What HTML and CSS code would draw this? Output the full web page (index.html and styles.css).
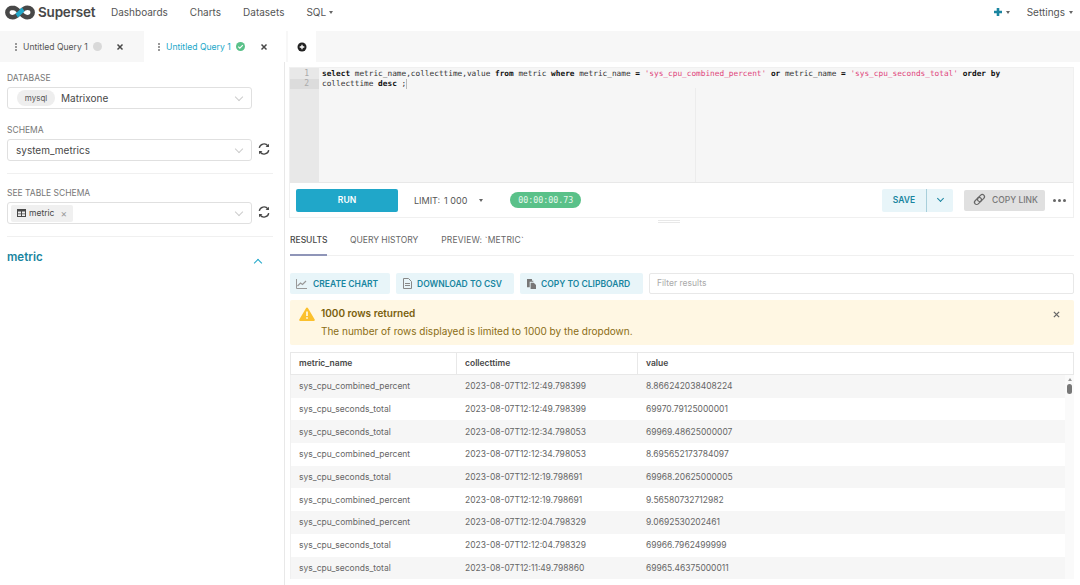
FILE: index.html
```html
<!DOCTYPE html>
<html lang="en">
<head>
<meta charset="utf-8">
<title>Superset SQL Lab</title>
<link rel="stylesheet" href="styles.css">
</head>
<body>
<header class="nav">
  <div class="brand">
    <svg class="logo" viewBox="0 0 32 16" width="30" height="15"><path d="M8.2 3C4.7 3 2.5 5.2 2.5 8s2.2 5 5.7 5c4 0 6-3 7.800-5 1.800-2 3.800-5 7.800-5 3.500 0 5.700 2.200 5.700 5s-2.200 5-5.700 5c-4 0-6-3-7.800-5-1.800-2-3.800-5-7.800-5z" fill="none" stroke="#484848" stroke-width="4.800"/><path d="M12.500 11.300c1.500-1 2.500-2.200 3.500-3.300 1-1.100 2-2.300 3.500-3.300" fill="none" stroke="#20a7c9" stroke-width="4.800"/></svg>
    <span class="brand-name">Superset</span>
  </div>
  <nav class="menu">
    <span>Dashboards</span><span>Charts</span><span>Datasets</span><span class="caret-item">SQL<i class="caret"></i></span>
  </nav>
  <div class="nav-right">
    <span class="plus-item"><svg viewBox="0 0 10 10" width="10" height="10"><path d="M5 1v8M1 5h8" stroke="#1a85a0" stroke-width="2.600" fill="none"/></svg><i class="caret"></i></span>
    <span class="caret-item settings">Settings<i class="caret"></i></span>
  </div>
</header>

<div class="tabbar">
  <div class="tab">
    <span class="grip"></span><span class="tab-title">Untitled Query 1</span><span class="dot grey"></span>
    <svg class="tab-x" viewBox="0 0 8 8" width="8" height="8"><path d="M1.500 1.500l5 5M6.500 1.500l-5 5" stroke="#484848" stroke-width="1.500"/></svg>
  </div>
  <div class="tab active">
    <span class="grip"></span><span class="tab-title">Untitled Query 1</span>
    <span class="dot green"><svg viewBox="0 0 9 9" width="9" height="9"><path d="M2.300 4.700l1.500 1.500 3-3" fill="none" stroke="#fff" stroke-width="1.100"/></svg></span>
    <svg class="tab-x" viewBox="0 0 8 8" width="8" height="8"><path d="M1.500 1.500l5 5M6.500 1.500l-5 5" stroke="#484848" stroke-width="1.500"/></svg>
  </div>
  <div class="tab-add"><svg viewBox="0 0 10 10" width="10" height="10"><circle cx="5" cy="5" r="4.500" fill="#222"/><path d="M5 2.700v4.600M2.700 5h4.600" stroke="#fff" stroke-width="1.300"/></svg></div>
</div>

<div class="workspace">
  <aside class="side">
    <div class="field">
      <div class="label">DATABASE</div>
      <div class="select-row">
        <div class="select"><span class="pill">mysql</span><span class="select-val">Matrixone</span><i class="chev"></i></div>
      </div>
    </div>
    <div class="field tight">
      <div class="label">SCHEMA</div>
      <div class="select-row">
        <div class="select"><span class="select-val solo">system_metrics</span><i class="chev"></i></div>
        <svg class="refresh" viewBox="0 0 14 14" width="12" height="12"><path d="M1.500 5.800A5.600 5.600 0 0 1 11.600 3.500M12.500 8.200A5.600 5.600 0 0 1 2.400 10.500" fill="none" stroke="#484848" stroke-width="1.600"/><path d="M12.800 0.800v4h-4zM1.200 13.200v-4h4z" fill="#484848"/></svg>
      </div>
    </div>
    <hr class="rule">
    <div class="field tight">
      <div class="label">SEE TABLE SCHEMA</div>
      <div class="select-row">
        <div class="select"><span class="tag"><svg viewBox="0 0 9 8" width="9" height="8"><path d="M0 0h9v8H0z" fill="#484848"/><path d="M1 2.500h3v2H1zM5 2.500h3v2H5zM1 5.300h3v1.800H1zM5 5.300h3v1.800H5z" fill="#eee"/></svg>metric<span class="tag-x">×</span></span><i class="chev"></i></div>
        <svg class="refresh" viewBox="0 0 14 14" width="12" height="12"><path d="M1.500 5.800A5.600 5.600 0 0 1 11.600 3.500M12.500 8.200A5.600 5.600 0 0 1 2.400 10.500" fill="none" stroke="#484848" stroke-width="1.600"/><path d="M12.800 0.800v4h-4zM1.200 13.200v-4h4z" fill="#484848"/></svg>
      </div>
    </div>
    <hr class="rule">
    <div class="table-head"><span class="table-name">metric</span><i class="chev-up"></i></div>
  </aside>

  <main class="main">
    <section class="editor-card">
      <div class="editor">
        <div class="gutter"><div class="ln">1</div><div class="ln cur">2</div></div>
        <div class="code">
          <div class="margin-line"></div>
          <div class="code-line"><b>select</b> metric_name,collecttime,value <b>from</b> metric <b>where</b> metric_name <b>=</b> <em>'sys_cpu_combined_percent'</em> <b>or</b> metric_name <b>=</b> <em>'sys_cpu_seconds_total'</em> <b>order by</b></div>
          <div class="code-line">collecttime <b>desc</b> ;<span class="cursor"></span></div>
        </div>
      </div>
      <div class="toolbar">
        <button class="run">RUN</button>
        <span class="limit">LIMIT:<span class="limit-val">1 000</span><i class="caret"></i></span>
        <span class="timer">00:00:00.73</span>
        <span class="spacer"></span>
        <div class="save"><span class="save-text">SAVE</span><span class="save-arrow"><i class="chev-down"></i></span></div>
        <div class="copy"><svg viewBox="0 0 14 14" width="14" height="14"><g fill="none" stroke="#666" stroke-width="1.200"><rect x="-0.500" y="-2.200" width="8" height="4.400" rx="2.200" transform="translate(3.500 10.500) rotate(-45)"/><rect x="-0.500" y="-2.200" width="8" height="4.400" rx="2.200" transform="translate(6.500 7.500) rotate(-45)"/></g></svg>COPY LINK</div>
        <div class="more"><i></i><i></i><i></i></div>
      </div>
    </section>
    <div class="drag"></div>
    <div class="tabs">
      <span class="t on">RESULTS</span><span class="t">QUERY HISTORY</span><span class="t wide">PREVIEW: `METRIC`</span>
    </div>
    <div class="actions">
      <span class="act a1"><svg viewBox="0 0 11 10" width="11" height="10"><path d="M.5 0v9.500H11" fill="none" stroke="#999" stroke-width="1"/><path d="M1.500 7l3-3 2 1.500L10 2" fill="none" stroke="#999" stroke-width="1.200"/></svg>CREATE CHART</span>
      <span class="act a2"><svg viewBox="0 0 9 11" width="9" height="11"><path d="M.5.500h5l3 3v7h-8z" fill="none" stroke="#888"/><path d="M2 5.500h5M2 7.500h5" stroke="#888"/></svg>DOWNLOAD TO CSV</span>
      <span class="act a3"><svg viewBox="0 0 10 11" width="9" height="10"><path d="M0 0h5.500v2H7v1H3v6H0z" fill="#777"/><path d="M4 4h3.500L10 6.500V11H4z" fill="#777"/></svg>COPY TO CLIPBOARD</span>
      <span class="filter">Filter results</span>
    </div>
    <div class="alert">
      <svg class="warn" viewBox="0 0 16 14" width="16" height="14"><path d="M8 .5a1 1 0 0 1 .9.500l6.800 11.400a1 1 0 0 1-.9 1.500H1.200a1 1 0 0 1-.9-1.500L7.100 1A1 1 0 0 1 8 .5z" fill="#fbc02d"/><path d="M8 4.500v4.500M8 10.300v1.500" stroke="#fff" stroke-width="1.500"/></svg>
      <div class="alert-body">
        <div class="alert-title">1000 rows returned</div>
        <div class="alert-text">The number of rows displayed is limited to 1000 by the dropdown.</div>
      </div>
      <svg class="alert-x" viewBox="0 0 8 8" width="7" height="7"><path d="M1 1l6 6M7 1l-6 6" stroke="#666" stroke-width="1.500"/></svg>
    </div>
    <div class="table">
      <div class="thead"><span class="c1">metric_name</span><span class="c2">collecttime</span><span class="c3">value</span></div>
      <div class="tbody">
        <div class="rows">
          <div class="row"><span class="c1">sys_cpu_combined_percent</span><span class="c2">2023-08-07T12:12:49.798399</span><span class="c3">8.866242038408224</span></div>
          <div class="row"><span class="c1">sys_cpu_seconds_total</span><span class="c2">2023-08-07T12:12:49.798399</span><span class="c3">69970.79125000001</span></div>
          <div class="row"><span class="c1">sys_cpu_seconds_total</span><span class="c2">2023-08-07T12:12:34.798053</span><span class="c3">69969.48625000007</span></div>
          <div class="row"><span class="c1">sys_cpu_combined_percent</span><span class="c2">2023-08-07T12:12:34.798053</span><span class="c3">8.695652173784097</span></div>
          <div class="row"><span class="c1">sys_cpu_seconds_total</span><span class="c2">2023-08-07T12:12:19.798691</span><span class="c3">69968.20625000005</span></div>
          <div class="row"><span class="c1">sys_cpu_combined_percent</span><span class="c2">2023-08-07T12:12:19.798691</span><span class="c3">9.56580732712982</span></div>
          <div class="row"><span class="c1">sys_cpu_combined_percent</span><span class="c2">2023-08-07T12:12:04.798329</span><span class="c3">9.0692530202461</span></div>
          <div class="row"><span class="c1">sys_cpu_seconds_total</span><span class="c2">2023-08-07T12:12:04.798329</span><span class="c3">69966.7962499999</span></div>
          <div class="row"><span class="c1">sys_cpu_seconds_total</span><span class="c2">2023-08-07T12:11:49.798860</span><span class="c3">69965.46375000011</span></div>
        </div>
        <div class="scroll"><i class="up"></i><i class="thumb"></i></div>
      </div>
    </div>
  </main>
</div>
</body>
</html>
```
FILE: styles.css
```css
* { box-sizing: border-box; }
html, body { margin: 0; height: 585px; overflow: hidden; }
body { font-family: Inter, "Liberation Sans", sans-serif; color: #484848; background: #fff; font-size: 9px; }
i { display: block; }

.nav { height: 31px; display: flex; align-items: center; padding: 0 7px 7px 5px; }
.brand { display: flex; align-items: center; gap: 3px; width: 106px; }
.logo { flex: none; }
.brand-name { font-size: 13.500px; font-weight: 600; letter-spacing: -.2px; color: #484848; }
.menu { display: flex; gap: 22px; font-size: 10px; color: #555; }
.caret-item { display: inline-flex; align-items: center; gap: 3px; }
.settings { gap: 4px; }
.caret { width: 0; height: 0; border: 2.500px solid transparent; border-top: 3px solid #666; border-bottom: 0; }
.nav-right { margin-left: auto; display: flex; gap: 17px; align-items: center; font-size: 10px; color: #555; }
.plus-item { display: inline-flex; align-items: center; gap: 3px; }

.tabbar { height: 31px; background: #f7f7f7; display: flex; align-items: stretch; }
.tab { width: 144px; display: flex; align-items: center; padding-left: 15px; font-size: 8.600px; color: #555; }
.tab.active { width: 142px; padding-left: 14px; background: #fff; color: #20a7c9; margin-right: 2px; }
.grip { width: 2px; height: 8px; margin-right: 6px; background: repeating-linear-gradient(#999 0 2px, transparent 2px 3px); }
.tab-title { white-space: nowrap; width: 65px; }
.dot { width: 9px; height: 9px; border-radius: 50%; margin-left: 5px; display: block; }
.dot svg { display: block; }
.dot.grey { background: #d9d9d9; }
.dot.green { background: #5ac189; }
.tab-x { margin-left: 14px; }
.tab.active .tab-x { margin-left: 15px; }
.tab-add { width: 28px; background: #fff; display: flex; align-items: center; justify-content: center; }

.workspace { display: flex; height: 523px; }
.side { width: 285px; flex: none; border-right: 1px solid #e8e8e8; padding: 11px 11px 0 7px; }
.label { font-size: 8.500px; color: #777; line-height: 10px; margin-bottom: 4px; }
.field { margin-bottom: 16px; }
.field.tight { margin-bottom: 12px; }
.select-row { display: flex; align-items: center; }
.select { width: 245px; height: 22px; border: 1px solid #e0e0e0; border-radius: 3px; display: flex; align-items: center; padding: 0 9px 0 3px; background: #fff; }
.pill { background: #eee; border-radius: 9px; height: 16px; width: 38px; margin-left: 6px; font-size: 8px; display: flex; align-items: center; justify-content: center; color: #555; }
.select-val { font-size: 10px; margin-left: 6px; color: #484848; }
.select-val.solo { margin-left: 5px; }
.chev { width: 6px; height: 6px; border-right: 1px solid #ccc; border-bottom: 1px solid #ccc; transform: rotate(45deg); margin-left: auto; margin-top: -3px; }
.refresh { margin-left: 6px; margin-top: -3px; }
.rule { border: 0; border-top: 1px solid #f0f0f0; margin: 0 0 14px; }
.tag { display: flex; align-items: center; gap: 3px; background: #f0f0f0; height: 17px; padding: 0 6px; font-size: 8.500px; border-radius: 2px; }
.tag-x { color: #999; margin-left: 3px; font-size: 10px; }
.table-head { display: flex; align-items: flex-start; justify-content: space-between; padding-right: 10px; }
.table-name { font-size: 11.500px; line-height: 12px; font-weight: 600; color: #1985a0; }
.chev-up { width: 6px; height: 6px; border-left: 1.200px solid #20a7c9; border-top: 1.200px solid #20a7c9; transform: rotate(45deg); margin-top: 9px; margin-right: 2px; }

.main { flex: 1; padding: 5px 6px 0 5px; min-width: 0; }
.editor-card { width: 785px; margin-left: -1px; border: 1px solid #f0f0f0; }
.editor { height: 115px; display: flex; background: #f6f6f6; border-bottom: 1px solid #e8e8e8; }
.gutter { width: 29px; background: #e8e8e8; padding-top: 1px; }
.ln { height: 10px; font: 8px/10px "DejaVu Sans Mono", monospace; text-align: right; padding-right: 10px; color: #aaa; }
.ln.cur { background: #dcdcdc; }
.code { flex: 1; padding: 1px 0 0 3px; font: 7.780px/10px "DejaVu Sans Mono", monospace; color: #333; position: relative; }
.margin-line { position: absolute; left: 376px; top: 20px; bottom: 0; border-left: 1px solid #ececec; }
.code-line { height: 10px; white-space: pre; }
.code b { color: #111; }
.code em { font-style: normal; color: #e0457b; }
.cursor { display: inline-block; width: 1px; height: 10px; background: #bbb; vertical-align: top; }
.toolbar { height: 34px; display: flex; align-items: center; padding: 0 5px 0 6px; background: #fff; }
.run { width: 102px; height: 23px; border: 0; border-radius: 2px; background: #20a7c9; color: #fff; font: 600 8.500px Inter, sans-serif; padding: 0; }
.limit { display: inline-flex; align-items: center; margin-left: 16px; font-size: 9px; color: #555; }
.limit-val { margin: 0 12px 0 4px; }
.timer { width: 71px; height: 16px; margin-left: 27px; border-radius: 8px; background: #5ac189; color: #e8f7ee; font: 8.300px/16px "DejaVu Sans Mono", monospace; text-align: center; }
.spacer { flex: 1; }
.save { width: 71px; height: 23px; background: #e8f5f9; border-radius: 2px; display: flex; color: #1985a0; font-size: 8.500px; font-weight: 600; margin-right: 11px; }
.save-text { width: 45px; text-align: center; line-height: 23px; border-right: 1px solid #a8cfdb; }
.save-arrow { flex: 1; display: flex; align-items: center; justify-content: center; }
.chev-down { width: 5px; height: 5px; border-right: 1.300px solid #1985a0; border-bottom: 1.300px solid #1985a0; transform: rotate(45deg); margin-top: -3px; }
.copy { width: 81px; height: 21px; background: #e0e0e0; border-radius: 2px; display: flex; align-items: center; gap: 6px; padding-left: 8px; font-size: 8.500px; font-weight: 500; color: #777; white-space: nowrap; }
.more { display: flex; gap: 2px; margin: 0 2px 0 8px; }
.more i { width: 3px; height: 3px; border-radius: 50%; background: #666; }

.drag { height: 10px; width: 22px; background: linear-gradient(#e8e8e8, #e8e8e8) 0 2px / 100% 1px no-repeat, linear-gradient(#e8e8e8, #e8e8e8) 0 4px / 100% 1px no-repeat; transform: translateX(368px); }
.tabs { height: 28px; width: 784px; display: flex; gap: 23px; border-bottom: 1px solid #f0f0f0; font-size: 8.500px; color: #666; align-items: flex-start; padding-top: 7px; }
.t { height: 21px; line-height: 11px; white-space: nowrap; }
.t.wide { letter-spacing: .17px; }
.t.on { color: #484848; font-weight: 500; border-bottom: 2px solid #8f95b8; width: 37px; }
.actions { display: flex; gap: 6px; margin-top: 17px; align-items: center; }
.act { height: 21px; background: #e8f5f9; border-radius: 2px; display: inline-flex; align-items: center; font-size: 8.500px; font-weight: 600; color: #1985a0; white-space: nowrap; }
.a1 { width: 100px; gap: 6px; padding-left: 6px; }
.a2 { width: 118px; gap: 5px; padding-left: 7px; }
.a3 { width: 123px; gap: 5px; padding-left: 7px; }
.filter { width: 425px; height: 21px; border: 1px solid #e8e8e8; border-radius: 2px; padding-left: 7px; line-height: 19px; font-size: 8.500px; color: #aaa; }
.alert { width: 784px; height: 45px; background: #fff7e3; margin-top: 6px; display: flex; padding: 7px 14px 0 9px; border-radius: 2px; }
.warn { flex: none; }
.alert-body { margin-left: 6px; color: #7a5f0e; }
.alert-title { font-size: 10px; font-weight: 600; line-height: 12px; }
.alert-text { font-size: 10px; line-height: 12px; margin-top: 6px; color: #8a6d14; }
.alert-x { margin-left: auto; margin-top: 4px; }
.table { width: 784px; margin-top: 7px; }
.thead { height: 23px; display: flex; align-items: center; border: 1px solid #e8e8e8; font-size: 8.500px; font-weight: 600; color: #484848; }
.thead span { height: 100%; line-height: 21px; border-right: 1px solid #e8e8e8; }
.thead .c3 { border: 0; }
.c1 { width: 166px; padding-left: 8px; flex: none; }
.c2 { width: 181px; padding-left: 8px; flex: none; }
.c3 { flex: 1; padding-left: 8px; }
.tbody { display: flex; }
.rows { flex: 1; border-left: 1px solid #f0f0f0; }
.row { height: 22.700px; display: flex; align-items: center; font-size: 8.500px; color: #666; }
.row:nth-child(odd) { background: #f6f6f6; }
.scroll { width: 9px; background: #fafafa; display: flex; flex-direction: column; align-items: center; padding-top: 3px; gap: 3px; }
.up { width: 0; height: 0; border: 2px solid transparent; border-bottom: 3px solid #999; border-top: 0; }
.thumb { width: 5px; height: 10px; border-radius: 3px; background: #777; }
```
